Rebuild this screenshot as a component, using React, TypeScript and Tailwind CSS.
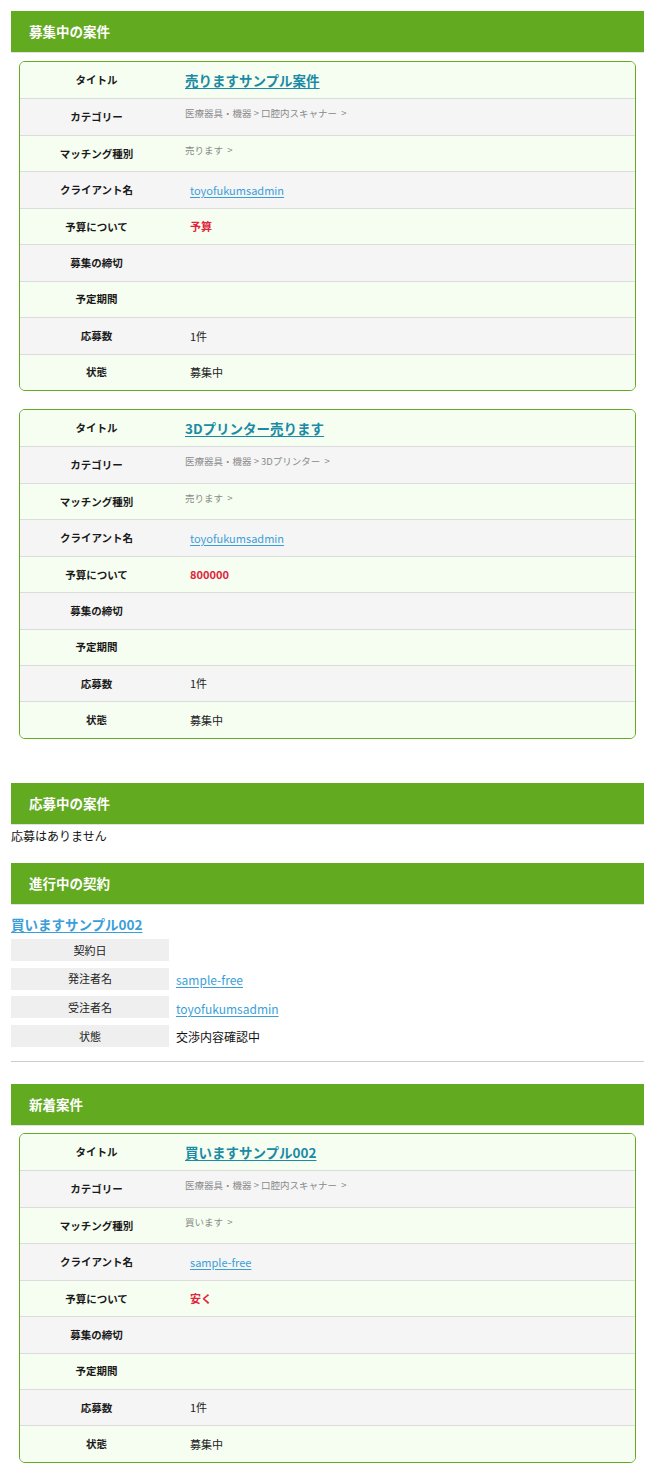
import React from 'react';

type Row = { label: string; value: React.ReactNode; top?: boolean };

const projects = [
  {
    title: '売りますサンプル案件',
    category: '医療器具・機器 > 口腔内スキャナー  >',
    kind: '売ります  >',
    client: 'toyofukumsadmin',
    budget: '予算',
  },
  {
    title: '3Dプリンター売ります',
    category: '医療器具・機器 > 3Dプリンター  >',
    kind: '売ります  >',
    client: 'toyofukumsadmin',
    budget: '800000',
  },
];

const latest = {
  title: '買いますサンプル002',
  category: '医療器具・機器 > 口腔内スキャナー  >',
  kind: '買います  >',
  client: 'sample-free',
  budget: '安く',
};

function SectionHeader({ children }: { children: React.ReactNode }) {
  return (
    <div className="h-[42px] bg-[#62aa1f] border-b border-[#e2e2e2] flex items-center pl-[18px] text-white font-bold text-[13.5px]">
      {children}
    </div>
  );
}

function ProjectCard({ p, className }: { p: typeof latest; className?: string }) {
  const rows: Row[] = [
    {
      label: 'タイトル',
      value: (
        <a href="#" className="text-[#1b8aa6] font-bold text-[13.5px] underline underline-offset-2">
          {p.title}
        </a>
      ),
    },
    { label: 'カテゴリー', value: <span className="text-[#8a8a8a] text-[9.5px] whitespace-pre">{p.category}</span>, top: true },
    { label: 'マッチング種別', value: <span className="text-[#8a8a8a] text-[9.5px] whitespace-pre">{p.kind}</span>, top: true },
    {
      label: 'クライアント名',
      value: (
        <a href="#" className="ml-[5px] text-[#3a9fd9] text-[11px] underline underline-offset-2">
          {p.client}
        </a>
      ),
    },
    { label: '予算について', value: <span className="ml-[5px] text-[#e0253d] font-bold text-[11px]">{p.budget}</span> },
    { label: '募集の締切', value: null },
    { label: '予定期間', value: null },
    { label: '応募数', value: <span className="ml-[5px] text-[11px] text-[#222]">1件</span> },
    { label: '状態', value: <span className="ml-[5px] text-[11px] text-[#222]">募集中</span> },
  ];

  return (
    <div className={`mx-2 border border-[#62aa1f] rounded-[6px] overflow-hidden ${className ?? ''}`}>
      {rows.map((r, i) => (
        <div
          key={r.label}
          className={`h-[36.45px] flex ${i > 0 ? 'border-t border-[#dcdcdc]' : ''} ${i % 2 === 0 ? 'bg-[#f5fef0]' : 'bg-[#f5f5f5]'}`}
        >
          <div className="w-[153px] shrink-0 flex items-center justify-center font-bold text-[10.5px] text-[#1a1a1a]">
            {r.label}
          </div>
          <div className={`flex-1 flex pl-[12px] ${r.top ? 'items-start pt-[7px]' : 'items-center'}`}>{r.value}</div>
        </div>
      ))}
    </div>
  );
}

function ContractRow({ label, children }: { label: string; children?: React.ReactNode }) {
  return (
    <div className="flex items-center h-[22px]">
      <div className="w-[158px] h-full bg-[#efefef] flex items-center justify-center text-[11px] text-[#222]">
        {label}
      </div>
      <div className="pl-[7px] pt-[3px] text-[12px] text-[#111]">{children}</div>
    </div>
  );
}

export default function App() {
  return (
    <div
      className="bg-white pt-[11px] pl-[11px] pr-[12px] pb-[14px] leading-normal"
      style={{ fontFamily: '"Noto Sans CJK JP", "Noto Sans", sans-serif' }}
    >
      <SectionHeader>募集中の案件</SectionHeader>
      <ProjectCard p={projects[0]} className="mt-[8px]" />
      <ProjectCard p={projects[1]} className="mt-[18px]" />

      <div className="mt-[44px]">
        <SectionHeader>応募中の案件</SectionHeader>
        <p className="text-[12px] text-[#111] leading-[18px] mt-[2px]">応募はありません</p>
      </div>

      <div className="mt-[18px]">
        <SectionHeader>進行中の契約</SectionHeader>
        <a href="#" className="block mt-[9px] text-[13.5px] font-bold text-[#3a9fd9] underline underline-offset-2 leading-[20px]">
          買いますサンプル002
        </a>
        <div className="mt-[5px] flex flex-col gap-y-[6.7px]">
          <ContractRow label="契約日" />
          <ContractRow label="発注者名">
            <a href="#" className="text-[#3a9fd9] underline underline-offset-2">sample-free</a>
          </ContractRow>
          <ContractRow label="受注者名">
            <a href="#" className="text-[#3a9fd9] underline underline-offset-2">toyofukumsadmin</a>
          </ContractRow>
          <ContractRow label="状態">交渉内容確認中</ContractRow>
        </div>
        <hr className="mt-[14px] border-0 border-t border-[#cccccc]" />
      </div>

      <div className="mt-[22px]">
        <SectionHeader>新着案件</SectionHeader>
        <ProjectCard p={latest} className="mt-[7px]" />
      </div>
    </div>
  );
}
